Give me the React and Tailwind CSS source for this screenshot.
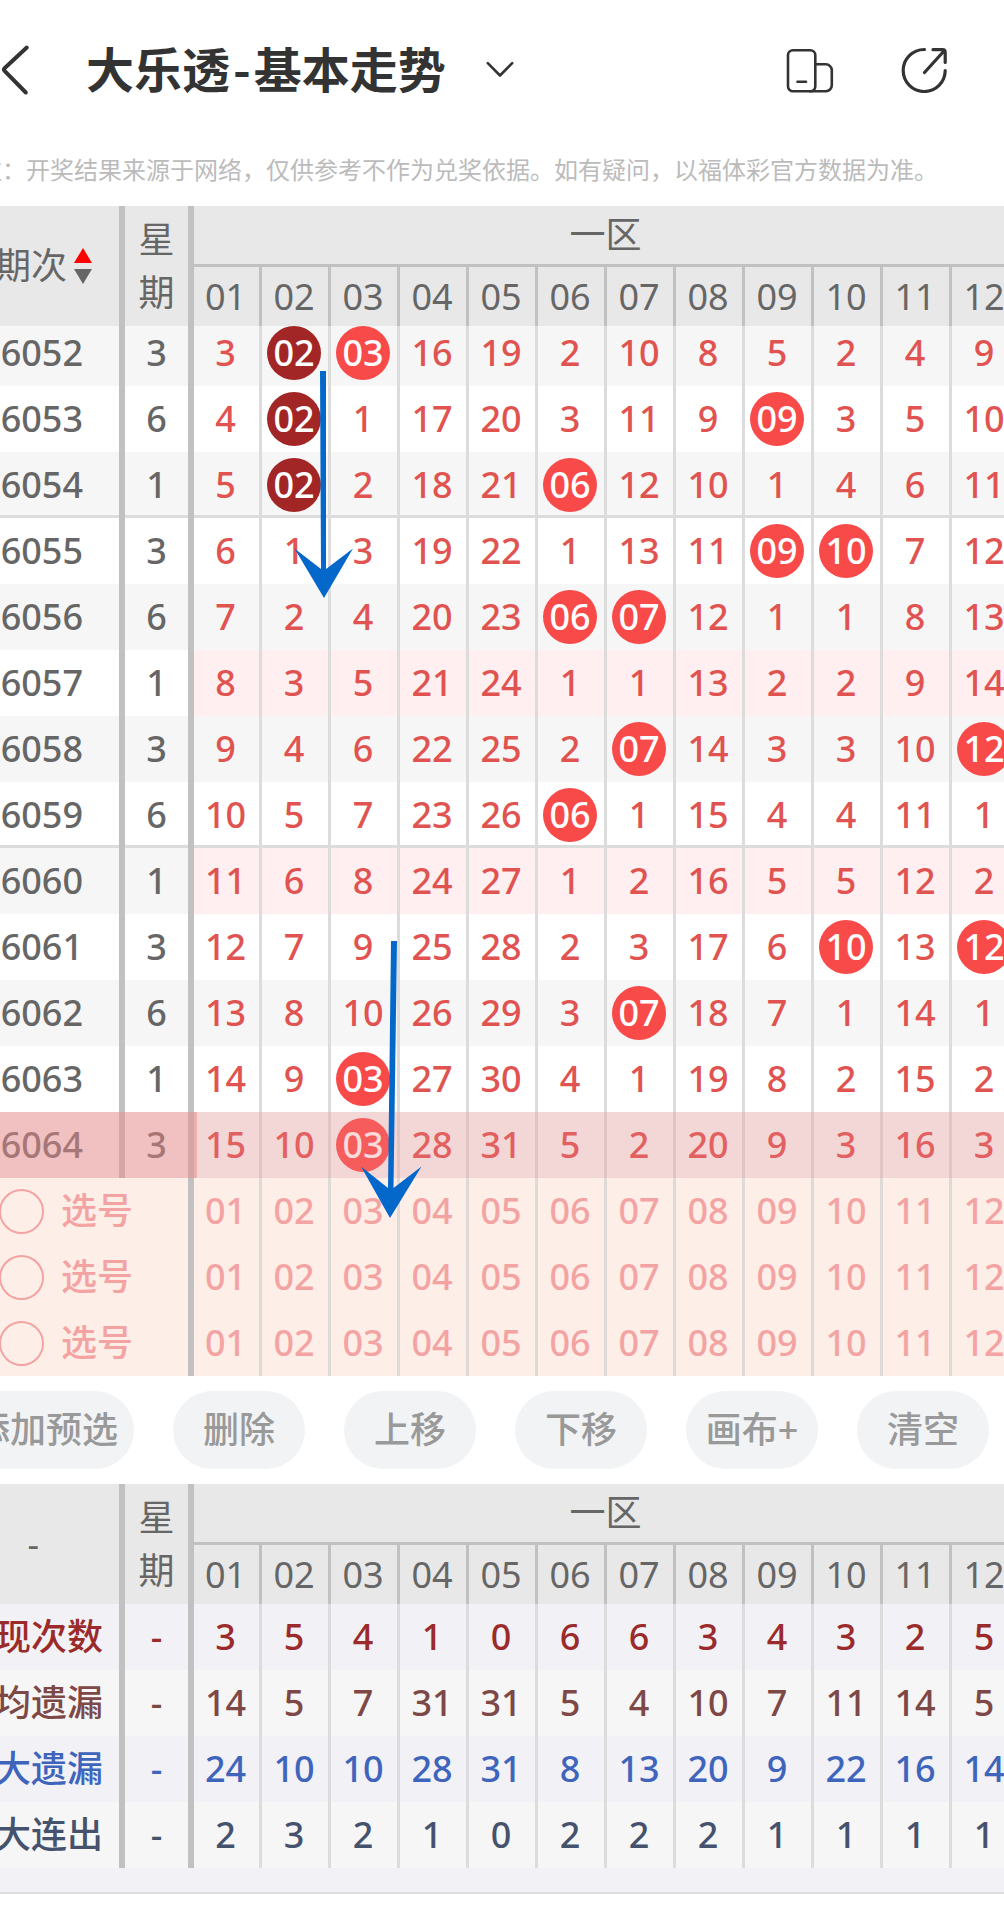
const NUMBERS = ["01", "02", "03", "04", "05", "06", "07", "08", "09", "10", "11", "12"];

// "x" = number was drawn, "r" = drawn several times in a row
const DRAWS = [
  { issue: "6052", day: 3, cells: [3, "r", "x", 16, 19, 2, 10, 8, 5, 2, 4, 9] },
  { issue: "6053", day: 6, cells: [4, "r", 1, 17, 20, 3, 11, 9, "x", 3, 5, 10] },
  { issue: "6054", day: 1, cells: [5, "r", 2, 18, 21, "x", 12, 10, 1, 4, 6, 11], divider: true },
  { issue: "6055", day: 3, cells: [6, 1, 3, 19, 22, 1, 13, 11, "x", "x", 7, 12] },
  { issue: "6056", day: 6, cells: [7, 2, 4, 20, 23, "x", "x", 12, 1, 1, 8, 13] },
  { issue: "6057", day: 1, cells: [8, 3, 5, 21, 24, 1, 1, 13, 2, 2, 9, 14], empty: true },
  { issue: "6058", day: 3, cells: [9, 4, 6, 22, 25, 2, "x", 14, 3, 3, 10, "x"] },
  { issue: "6059", day: 6, cells: [10, 5, 7, 23, 26, "x", 1, 15, 4, 4, 11, 1], divider: true },
  { issue: "6060", day: 1, cells: [11, 6, 8, 24, 27, 1, 2, 16, 5, 5, 12, 2], empty: true },
  { issue: "6061", day: 3, cells: [12, 7, 9, 25, 28, 2, 3, 17, 6, "x", 13, "x"] },
  { issue: "6062", day: 6, cells: [13, 8, 10, 26, 29, 3, "x", 18, 7, 1, 14, 1] },
  { issue: "6063", day: 1, cells: [14, 9, "x", 27, 30, 4, 1, 19, 8, 2, 15, 2] },
  { issue: "6064", day: 3, cells: [15, 10, "x", 28, 31, 5, 2, 20, 9, 3, 16, 3], active: true },
];

const STATS = [
  { label: "现次数", cells: [3, 5, 4, 1, 0, 6, 6, 3, 4, 3, 2, 5], style: "bg-[#f1f1f6] text-[#9b2b2b]" },
  { label: "均遗漏", cells: [14, 5, 7, 31, 31, 5, 4, 10, 7, 11, 14, 5], style: "bg-[#f6f6f6] text-[#7d4846]" },
  { label: "大遗漏", cells: [24, 10, 10, 28, 31, 8, 13, 20, 9, 22, 16, 14], style: "bg-[#f1f1f6] text-[#3e65bb]" },
  { label: "大连出", cells: [2, 3, 2, 1, 0, 2, 2, 2, 1, 1, 1, 1], style: "bg-[#f6f6f6] text-[#45526d]" },
];

const ACTIONS = ["添加预选", "删除", "上移", "下移", "画布+", "清空"];

function Header() {
  return (
    <header className="flex h-[138px] items-center text-[#333]">
      <button type="button" aria-label="返回" className="shrink-0">
        <svg className="h-[54px] w-8" viewBox="0 0 32 54" fill="none" stroke="currentColor" strokeWidth="4" strokeLinecap="round" strokeLinejoin="round">
          <path d="M26.800 5.500L4.800 26Q3.200 27.600 4.800 29.200L25.800 50.500" />
        </svg>
      </button>
      <h1 className="ml-[54px] pb-1 whitespace-nowrap font-['Noto_Sans_CJK_SC',sans-serif] text-[48px] leading-[60px] font-bold">
        大乐透<span className="mx-[3px]">-</span>基本走势
      </h1>
      <button type="button" aria-label="切换走势" className="ml-10 shrink-0">
        <svg className="h-5 w-7" viewBox="0 0 28 20" fill="none" stroke="currentColor" strokeWidth="2.600" strokeLinecap="round" strokeLinejoin="round">
          <path d="M1.800 4.200L14 16.500L26.200 4.200" />
        </svg>
      </button>
      <div className="mr-14 ml-auto flex items-center gap-[66px]">
        <button type="button" aria-label="横屏">
          <svg className="h-12 w-12" viewBox="0 0 48 48" fill="none" stroke="currentColor" strokeWidth="2.600" strokeLinecap="round" strokeLinejoin="round">
            <rect x="2" y="5.300" width="27.300" height="41" rx="5" />
            <path d="M29.300 19.300H39.800a6 6 0 0 1 6 6V40.300a6 6 0 0 1-6 6H24M11.500 36.700h8.500" />
          </svg>
        </button>
        <button type="button" aria-label="分享">
          <svg className="h-12 w-12" viewBox="0 0 48 48" fill="none" stroke="currentColor" strokeWidth="3.200" strokeLinecap="round" strokeLinejoin="round">
            <path d="M24.200 4.500A21 21 0 1 0 45.200 25.500M24.200 4.500H24.500" />
            <path d="M33 4.700H42.500Q45.200 4.700 45.200 7.400V17.500M44 6L24.500 27.500" />
          </svg>
        </button>
      </div>
    </header>
  );
}

function Columns() {
  return (
    <colgroup>
      <col className="w-[125px]" />
      <col className="w-[69px]" />
      <col className="w-[68px]" />
      {NUMBERS.slice(1).map((n) => (
        <col key={n} className="w-[69px]" />
      ))}
    </colgroup>
  );
}

function TableHead({ children }) {
  return (
    <thead className="bg-[#e8e8e8] text-[#666]">
      <tr className="h-[61px]">
        <th rowSpan={2} className="border-r-6 border-[#c1c1c1] p-0 font-normal">
          {children}
        </th>
        <th rowSpan={2} className="border-r-6 border-[#c1c1c1] px-3 py-0 leading-[53px] font-normal">
          星<br />期
        </th>
        <th colSpan={12} className="border-b-3 border-[#c1c1c1] py-0 pr-1 pl-0 font-normal">
          一区
        </th>
      </tr>
      <tr className="h-[59px]">
        {NUMBERS.map((n) => (
          <th key={n} className="border-r-3 border-[#c1c1c1] py-0 pr-0.5 pl-0 font-normal">
            {n}
          </th>
        ))}
      </tr>
    </thead>
  );
}

function DrawCell({ value, number, active }) {
  if (value !== "x" && value !== "r") return value;
  const color = value === "r" ? "bg-[#a32626] text-white" : active ? "bg-[#f55c5b] text-[#f9dada]" : "bg-[#f94a4a] text-white";
  return (
    <span className={`mx-auto flex h-[54px] w-[54px] items-center justify-center rounded-full ${color}`}>{number}</span>
  );
}

function DrawRow({ draw, index }) {
  const { active, empty, divider } = draw;
  const stripe = index % 2 === 0 ? "bg-[#f6f6f6]" : "bg-white";
  const line = divider ? "shadow-[inset_0_-3px_#dcdcdc]" : "";
  const pad = index === 0 ? "pt-0 pb-1.5" : "py-0";
  const side = active ? "border-[#d4a5a5] bg-[#f1c1c1] text-[#a77777]" : `border-[#c1c1c1] text-[#666] ${stripe}`;
  const main = active
    ? "border-[#e2c4c4] bg-[#f3d7d7] text-[#e26060]"
    : `border-[#dcdcdc] text-[#e05350] ${empty ? "bg-[#ffeff0]" : stripe}`;

  return (
    <tr className={index === 0 ? "h-[60px]" : "h-[66px]"}>
      <td className={`border-r-6 pr-9 pl-0 text-right ${pad} ${side} ${line}`}>{draw.issue}</td>
      <td className={`border-r-6 px-0 text-center ${pad} ${side} ${line}`}>{draw.day}</td>
      {draw.cells.map((value, i) => (
        <td
          key={i}
          className={`border-r-3 pr-0.5 pl-0 text-center ${pad} ${main} ${line} ${
            active && i === 0 ? "shadow-[inset_3px_0_#ebb1b1]" : ""
          }`}
        >
          <DrawCell value={value} number={NUMBERS[i]} active={active} />
        </td>
      ))}
    </tr>
  );
}

function PickRow({ id }) {
  return (
    <tr className="h-[66px] bg-[#feeee8] text-[#f4a3a3]">
      <td colSpan={2} className="border-r-6 border-[#c1c1c1] p-0">
        <label className="-ml-px flex items-center gap-[17px]">
          <input
            type="radio"
            name="pick"
            value={id}
            className="h-[45px] w-[45px] appearance-none rounded-full border-2 border-[#f4a3a3] checked:bg-[#f4a3a3]"
          />
          选号
        </label>
      </td>
      {NUMBERS.map((n) => (
        <td key={n} className="border-r-3 border-[#dedad8] py-0 pr-0.5 pl-0 text-center">
          {n}
        </td>
      ))}
    </tr>
  );
}

function Arrows() {
  return (
    <svg className="pointer-events-none absolute top-0 left-0" width="1021" height="1170" viewBox="0 0 1021 1170" fill="#0468cb">
      <path d="M320 165H326V363L353 342.500L324 392L294.500 342.500L321 363Z" />
      <path d="M391 735H397L393.500 982L421.500 960.500L390 1012L361 960.500L388 982Z" />
    </svg>
  );
}

export default function App() {
  return (
    <div className="min-h-screen overflow-hidden bg-white font-['Noto_Sans','Noto_Sans_CJK_SC',sans-serif] text-[36px] leading-[54px] font-medium">
      <Header />
      <p className="-ml-[22px] flex h-[68px] items-center pb-1 text-2xl font-normal whitespace-nowrap text-[#bbb]">
        注：开奖结果来源于网络，仅供参考不作为兑奖依据。如有疑问，以福体彩官方数据为准。
      </p>

      <div className="relative overflow-x-auto overflow-y-hidden [scrollbar-width:none]">
        <table className="w-full min-w-[1021px] table-fixed border-separate border-spacing-0">
          <Columns />
          <TableHead>
            <button type="button" className="flex w-full items-center justify-end gap-[7px] pr-[27px] whitespace-nowrap">
              期次
              <svg className="h-9 w-[18px] shrink-0" viewBox="0 0 18 36">
                <path d="M9 0L18 15H0Z" fill="#f00" />
                <path d="M0 21H18L9 36Z" fill="#666" />
              </svg>
            </button>
          </TableHead>
          <tbody>
            {DRAWS.map((draw, i) => (
              <DrawRow key={draw.issue} draw={draw} index={i} />
            ))}
            {[1, 2, 3].map((id) => (
              <PickRow key={id} id={id} />
            ))}
          </tbody>
        </table>
        <Arrows />
      </div>

      <div className="-ml-[42px] flex h-[108px] items-center gap-[39px]">
        {ACTIONS.map((label) => (
          <button
            key={label}
            type="button"
            className="h-[78px] min-w-[132px] shrink-0 rounded-full bg-[#f1f3f5] px-4 whitespace-nowrap text-[#999]"
          >
            {label}
          </button>
        ))}
      </div>

      <div className="overflow-x-auto overflow-y-hidden [scrollbar-width:none]">
        <table className="w-full min-w-[1021px] table-fixed border-separate border-spacing-0">
          <Columns />
          <TableHead>
            <div className="pr-20 text-right">-</div>
          </TableHead>
          <tbody>
            {STATS.map((row) => (
              <tr key={row.label} className={`h-[66px] ${row.style}`}>
                <th className="border-r-6 border-[#c1c1c1] p-0 font-medium">
                  <div className="flex justify-end pr-4 whitespace-nowrap">{row.label}</div>
                </th>
                <td className="border-r-6 border-[#c1c1c1] p-0 text-center">-</td>
                {row.cells.map((value, i) => (
                  <td key={i} className="border-r-3 border-[#dcdcdc] py-0 pr-0.5 pl-0 text-center">
                    {value}
                  </td>
                ))}
              </tr>
            ))}
          </tbody>
        </table>
      </div>
      <div className="h-[26px] border-b-2 border-[#dcdcdc] bg-[#f1f1f6]" />
    </div>
  );
}
